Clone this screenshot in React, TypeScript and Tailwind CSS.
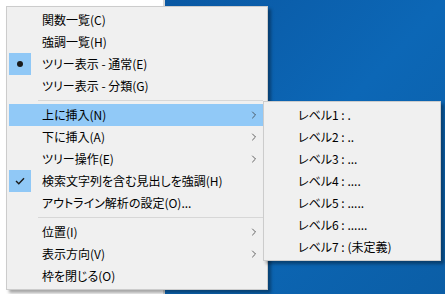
import { ChevronRight } from "lucide-react";

type Item =
  | { sep: true }
  | { sep?: false; label: string; mark?: "dot" | "check"; sub?: boolean; active?: boolean };

const mainItems: Item[] = [
  { label: "関数一覧(C)" },
  { label: "強調一覧(H)" },
  { label: "ツリー表示 - 通常(E)", mark: "dot" },
  { label: "ツリー表示 - 分類(G)" },
  { sep: true },
  { label: "上に挿入(N)", sub: true, active: true },
  { label: "下に挿入(A)", sub: true },
  { label: "ツリー操作(E)", sub: true },
  { label: "検索文字列を含む見出しを強調(H)", mark: "check" },
  { label: "アウトライン解析の設定(O)..." },
  { sep: true },
  { label: "位置(I)", sub: true },
  { label: "表示方向(V)", sub: true },
  { label: "枠を閉じる(O)" },
];

const levels = [
  "レベル1 : .",
  "レベル2 : ..",
  "レベル3 : ...",
  "レベル4 : ....",
  "レベル5 : .....",
  "レベル6 : ......",
  "レベル7 : (未定義)",
];

function Mark({ kind }: { kind?: "dot" | "check" }) {
  if (!kind) return <div className="w-[22px] h-[22px]" />;
  return (
    <div className="w-[22px] h-[22px] bg-[#90c8f6] flex items-center justify-center">
      {kind === "dot" ? (
        <div className="w-[6px] h-[6px] rounded-full bg-[#1a1a1a]" />
      ) : (
        <svg width="10" height="8" viewBox="0 0 10 8">
          <path d="M1 4 L3.8 6.8 L9 1.2" fill="none" stroke="#1a1a1a" strokeWidth="1.4" />
        </svg>
      )}
    </div>
  );
}

export default function App() {
  return (
    <div
      className="relative w-[445px] h-[294px] overflow-hidden flex text-[12px] text-black [font-feature-settings:'palt']"
      style={{ fontFamily: '"Noto Sans CJK JP", "Noto Sans", sans-serif' }}
    >
      <div className="w-[165px] h-full bg-white border-r-2 border-[#d9d9d9]" />
      <div className="flex-1 h-full bg-gradient-to-br from-[#0a58a3] via-[#0c67b6] to-[#0b5ea6]" />

      {/* main context menu */}
      <div className="absolute left-[6px] top-[6px] w-[262px] bg-[#f0f0f0] border border-[#cccccc] py-[2px] pl-[2px] pr-[4px] shadow-[3px_3px_3px_rgba(0,0,0,0.35)]">
        {mainItems.map((it, i) =>
          it.sep ? (
            <div key={i} className="h-[7px] flex items-center pl-[29px]">
              <div className="h-px w-full bg-[#d7d7d7]" />
            </div>
          ) : (
            <div
              key={i}
              className={`h-[22px] flex items-center ${it.active ? "bg-[#91c9f7]" : ""}`}
            >
              <Mark kind={it.mark} />
              <span className="ml-[11px] flex-1 leading-[22px] whitespace-nowrap">{it.label}</span>
              {it.sub && <ChevronRight className="w-[12px] h-[12px] mr-[3px] text-[#333]" strokeWidth={1.5} />}
            </div>
          )
        )}
      </div>

      {/* submenu */}
      <div className="absolute left-[263px] top-[101px] w-[178px] bg-[#f0f0f0] border border-[#cccccc] py-[2px] shadow-[3px_3px_3px_rgba(0,0,0,0.35)]">
        {levels.map((l) => (
          <div key={l} className="h-[22px] flex items-center pl-[34px] leading-[22px] whitespace-nowrap">
            {l}
          </div>
        ))}
      </div>
    </div>
  );
}
